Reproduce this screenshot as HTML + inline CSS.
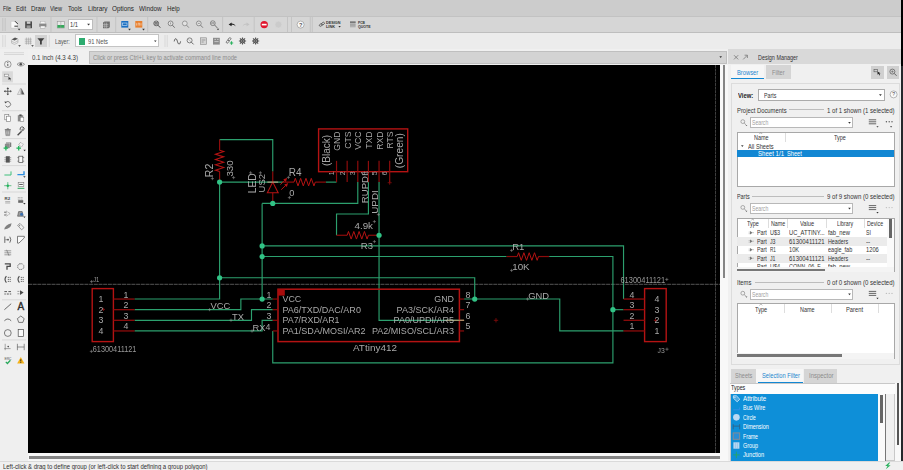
<!DOCTYPE html>
<html><head><meta charset="utf-8">
<style>
*{box-sizing:border-box;margin:0;padding:0}
html,body{width:903px;height:470px;overflow:hidden;background:#f0f0f0;font-family:"Liberation Sans",sans-serif;font-size:6px;color:#333}
.a{position:absolute}
.t{position:absolute;white-space:nowrap;font-size:7px;line-height:8px;transform:scaleX(.765);transform-origin:0 0;color:#2e2e2e}
#menubar{left:0;top:0;width:903px;height:16px;background:#cccccc}
#tb1{left:0;top:16px;width:903px;height:16.6px;background:#d6d6d6;border-top:0.6px solid #c2c2c2;border-bottom:0.8px solid #bebebe}
#tb2{left:0;top:32.6px;width:903px;height:17.6px;background:#ececec}
#row3{left:0;top:49px;width:728px;height:16px;background:#f0f0f0}
#ltb{left:0;top:49px;width:28px;height:411px;background:#efefef}
#canvas{left:28px;top:65px;width:692px;height:388.3px;background:#000}
#status{left:0;top:461px;width:903px;height:9px;background:#f0f0f0;border-top:0.6px solid #dadada}
#dm{left:728px;top:49px;width:175px;height:411px;background:#f0f0f0}
</style></head><body>
<div id="menubar" class="a">
<span class="t" style="left:3px;top:5.0px;color:#262626;transform:scaleX(0.727);">File</span><span class="t" style="left:15.5px;top:5.0px;color:#262626;transform:scaleX(0.829);">Edit</span><span class="t" style="left:31px;top:5.0px;color:#262626;transform:scaleX(0.888);">Draw</span><span class="t" style="left:50px;top:5.0px;color:#262626;transform:scaleX(0.798);">View</span><span class="t" style="left:68px;top:5.0px;color:#262626;transform:scaleX(0.857);">Tools</span><span class="t" style="left:87.5px;top:5.0px;color:#262626;transform:scaleX(0.911);">Library</span><span class="t" style="left:112px;top:5.0px;color:#262626;transform:scaleX(0.912);">Options</span><span class="t" style="left:139px;top:5.0px;color:#262626;transform:scaleX(0.904);">Window</span><span class="t" style="left:166.5px;top:5.0px;color:#262626;transform:scaleX(0.882);">Help</span>
</div>
<div id="tb1" class="a"></div>
<div id="tb2" class="a"></div>
<div id="row3" class="a"></div>
<!-- combos -->
<div class="a" style="left:67.5px;top:19px;width:25px;height:11.4px;background:#fff;border:0.6px solid #bdbdbd"></div>
<span class="t" style="left:70px;top:21.3px;color:#333;transform:scaleX(0.822);">1/1</span>
<div class="a" style="left:35.2px;top:35.2px;width:11.6px;height:11.6px;background:#d2d2d2"></div>
<span class="t" style="left:55.3px;top:37.7px;color:#555;transform:scaleX(0.756);">Layer:</span>
<div class="a" style="left:75px;top:34.4px;width:84px;height:12.4px;background:#fff;border:0.6px solid #c4c4c4"></div>
<div class="a" style="left:78.6px;top:37.6px;width:6.6px;height:7px;background:#2dab6f"></div>
<span class="t" style="left:88px;top:37.7px;color:#555;transform:scaleX(0.829);">91 Nets</span>
<!-- command line -->
<span class="t" style="left:31.5px;top:54.0px;color:#3a3a3a;transform:scaleX(0.876);">0.1 inch (4.3 4.3)</span>
<div class="a" style="left:89px;top:51px;width:637.5px;height:13px;background:#d3d3d3;border:0.6px solid #bfbfbf"></div>
<span class="t" style="left:92.5px;top:54.0px;color:#8c8c8c;transform:scaleX(0.825);">Click or press Ctrl+L key to activate command line mode</span>
<svg class="a" style="left:0;top:0" width="903" height="66" viewBox="0 0 903 66" font-family="Liberation Sans, sans-serif">
<!-- separators tb1 -->
<g stroke="#bcbcbc" stroke-width="0.7" fill="none">
<path d="M2.8,18V31M5.2,18V31M51,17V32M97,17V32M115.7,17V32M147.7,17V32M222.6,17V32M254.2,17V32M287.5,17V32M291.5,17V32M310.3,17V32M312.3,17V32"/>
<path d="M2.8,35V47M5.2,35V47M49.3,35V47M165,35V47M167.200,35V47" stroke-width=".5" stroke="#c4c4c4"/>
</g>
<!-- new doc -->
<path d="M11,21.3h4.2l2.4,2.2v4.6H11z" fill="#fafafa" stroke="#bdbdbd" stroke-width=".5"/>
<path d="M15,21.2l2.8,2.8M14.4,26.2h3.4" stroke="#333" stroke-width="1"/>
<path d="M17.8,28.8h2.6l-1.3,1.6z" fill="#333"/>
<!-- save -->
<path d="M25.2,21.4h6.8v6.8h-6.8z" fill="#4a4a4a"/><rect x="26.8" y="21.4" width="3.6" height="2.4" fill="#cfcfcf"/><rect x="26.6" y="25.4" width="4" height="2.8" fill="#9a9a9a"/>
<!-- print -->
<rect x="39.2" y="23.6" width="7.2" height="3.2" fill="#8a8a8a"/><rect x="40.6" y="21.4" width="4.4" height="2.2" fill="#f4f4f4" stroke="#aaa" stroke-width=".4"/><rect x="40.6" y="26" width="4.4" height="2.2" fill="#f4f4f4" stroke="#999" stroke-width=".4"/>
<!-- sheet icon -->
<rect x="57.2" y="21.4" width="7.2" height="6.6" fill="#e8e8e8" stroke="#8a8a8a" stroke-width=".5"/><rect x="57.4" y="25" width="6.8" height="2.8" fill="#35a85a"/><path d="M60.8,21.4v6.6" stroke="#999" stroke-width=".5"/>
<path d="M87.2,23.8h2.8l-1.4,1.8z" fill="#333"/>
<!-- grid icon -->
<path d="M103,22.6l1.6,-1h5.2v5.6l-1.4,1h-5.4z" fill="#6e6e6e"/><path d="M104.8,22.6v5.4M106.6,22.6v5.4M103,24.4h5.4M103,26.2h5.4" stroke="#d0d0d0" stroke-width=".5"/>
<!-- SCH / BRD -->
<rect x="121.3" y="21" width="7" height="6.6" fill="#1b6fc2"/><rect x="122.6" y="23" width="4.4" height="2.4" fill="none" stroke="#d8e6f5" stroke-width=".6"/>
<path d="M128.2,28.8h2.6l-1.3,1.6z" fill="#333"/>
<rect x="135.3" y="21" width="7" height="6.6" fill="#e8802f"/><path d="M136.6,25.6v-2.4M138.2,25.6v-2.4h1.4v2.4M141,23.2v2.4" stroke="#fbe3cf" stroke-width=".6" fill="none"/>
<path d="M142.2,28.8h2.6l-1.3,1.6z" fill="#333"/>
<!-- zoom icons -->
<g fill="none" stroke="#666" stroke-width=".7">
<circle cx="156.2" cy="23.4" r="2.4" stroke="#3a3a3a" fill="#dedede"/><path d="M158,25.2l2.300,2.500" stroke="#3a3a3a" stroke-width=".9"/><path d="M154.600,22.800h3.200M154.600,24h3.200" stroke="#333" stroke-width=".8"/>
<circle cx="170.600" cy="23.400" r="2.400" fill="#e2e2e2"/><path d="M172.400,25.200l2.300,2.500" stroke-width=".9"/><path d="M170.600,22.400v2" stroke-width=".6"/>
<circle cx="184.800" cy="23.400" r="2.400" fill="#e2e2e2" stroke="#808080"/><path d="M186.600,25.200l2.300,2.500" stroke-width=".9" stroke="#808080"/>
<circle cx="198.800" cy="23.400" r="2.400" fill="#e2e2e2" stroke="#707070"/><path d="M200.600,25.200l2.300,2.500" stroke-width=".9" stroke="#707070"/><path d="M197.800,23.400h2" stroke-width=".6"/>
<circle cx="212.800" cy="23.200" r="2.400" fill="#e2e2e2" stroke="#606060"/><path d="M214.600,25l2.800,3" stroke-width=".9"/><path d="M211.600,22.600h2.400v1.200h-2.400z" stroke-width=".5"/>
</g>
<path d="M216.800,28.800h2.400l-1.200,1.500z" fill="#333"/>
<!-- undo/redo -->
<path d="M228.6,24.4l3,-2v1.2c2,0 3.4,.8 4,2.8c-1,-1.2 -2.4,-1.6 -4,-1.6v1.4z" fill="#1e1e1e"/>
<path d="M249.6,24.4l-3,-2v1.2c-2,0 -3.4,.8 -4,2.8c1,-1.2 2.4,-1.6 4,-1.6v1.4z" fill="#c3c3c3"/>
<!-- stop / disabled / help -->
<circle cx="264.2" cy="24.6" r="3.7" fill="#e0162e"/><rect x="261.8" y="23.8" width="4.8" height="1.6" fill="#fff"/>
<circle cx="278.4" cy="24.6" r="3.5" fill="#cbcbcb" stroke="#d8d8d8" stroke-width=".6"/>
<circle cx="300.6" cy="24.6" r="3.5" fill="#fafafa" stroke="#8a8a8a" stroke-width=".6"/><text x="300.6" y="26.6" font-size="5.6" font-weight="bold" text-anchor="middle" fill="#555">?</text>
<!-- design link / pcb quote -->
<g fill="none" stroke="#555" stroke-width=".8"><rect x="319.2" y="24" width="3.2" height="2" rx="1" transform="rotate(-35 320.8 25)"/><rect x="321.4" y="22.6" width="3.2" height="2" rx="1" transform="rotate(-35 323 23.6)"/></g>
<text x="326" y="24" font-size="3.6" font-weight="bold" fill="#333" textLength="14.4" lengthAdjust="spacingAndGlyphs">DESIGN</text>
<text x="326" y="27.6" font-size="3.6" font-weight="bold" fill="#333" textLength="9" lengthAdjust="spacingAndGlyphs">LINK</text>
<path d="M338.4,26h2.4l-1.2,1.5z" fill="#333"/>
<rect x="350" y="21.4" width="5.6" height="6" fill="#b5b5b5"/><rect x="350" y="21.4" width="5.6" height="1.6" fill="#777"/><path d="M350,24.4h5.6M350,25.8h5.6" stroke="#8a8a8a" stroke-width=".4"/>
<text x="358" y="24" font-size="3.6" font-weight="bold" fill="#333" textLength="7" lengthAdjust="spacingAndGlyphs">PCB</text>
<text x="358" y="27.6" font-size="3.6" font-weight="bold" fill="#333" textLength="12.6" lengthAdjust="spacingAndGlyphs">QUOTE</text>
<!-- toolbar2 icons -->
<path d="M11.6,39.4l3.4,-1.8l3,1.2l-3.4,1.8z" fill="#555"/><path d="M11.6,41.4l3,1.2l3.4,-1.8M11.6,43.2l3,1.2l3.4,-1.8M11.6,39.6v3.6M18,39v3.6" stroke="#999" stroke-width=".5" fill="none"/>
<path d="M18.2,45.2h2.6l-1.3,1.6z" fill="#333"/>
<path d="M26.4,37.6v7M28.4,37.6v7M30.4,37.6v7M24.8,39.2h7M24.8,41.2h7M24.8,43.2h7" stroke="#9c9c9c" stroke-width=".6"/>
<path d="M31.2,45.2h2.6l-1.3,1.6z" fill="#333"/>
<path d="M37.4,38.2h7l-2.6,3v3.2h-1.8v-3.2z" fill="#3f3f3f"/>
<path d="M154,40.4h2.6l-1.3,1.7z" fill="#333"/>
<path d="M174.2,41.4c.8,-3.6 2.2,-3.6 3.2,0s2.400,3.6 3.200,0" fill="none" stroke="#444" stroke-width=".9"/>
<circle cx="189.600" cy="40.400" r="2.500" fill="none" stroke="#666" stroke-width=".8"/><path d="M191.400,42.200l2.200,2.200" stroke="#666" stroke-width="1"/><path d="M188.200,39l2.800,2.800" stroke="#888" stroke-width=".5"/>
<rect x="200.400" y="37.800" width="6.200" height="6.600" fill="#d4d4d4" stroke="#8a8a8a" stroke-width=".6"/><path d="M201.600,40h3.800M201.600,42h2" stroke="#777" stroke-width=".6"/>
<rect x="213" y="37.800" width="6.800" height="6.800" fill="#8c8c8c"/><path d="M214.400,39.400h1.600M217,39.400h1.600M214.400,41.600h4.200" stroke="#e0e0e0" stroke-width=".7"/>
<g fill="none" stroke="#666" stroke-width=".8"><rect x="226" y="40.600" width="3.400" height="2" rx="1" transform="rotate(-50 227.700 41.600)"/><rect x="227.800" y="38.200" width="3.400" height="2" rx="1" transform="rotate(-50 229.500 39.200)"/></g>
<path d="M229.800,43h3.400M231.500,41.300v3.400" stroke="#2bb25f" stroke-width="1.200"/>
<path d="M244.50,41.00L246.10,41.00M243.91,42.41L245.05,43.55M242.50,43.00L242.50,44.60M241.09,42.41L239.95,43.55M240.50,41.00L238.90,41.00M241.09,39.59L239.95,38.45M242.50,39.00L242.50,37.40M243.91,39.59L245.05,38.45" stroke="#555" stroke-width="1.1" fill="none"/><circle cx="242.5" cy="41" r="2" fill="#9a9a9a" stroke="#4a4a4a" stroke-width="1"/><circle cx="242.5" cy="41" r=".8" fill="#3a3a3a"/>
<path d="M257.60,41.00L259.20,41.00M257.01,42.41L258.15,43.55M255.60,43.00L255.60,44.60M254.19,42.41L253.05,43.55M253.60,41.00L252.00,41.00M254.19,39.59L253.05,38.45M255.60,39.00L255.60,37.40M257.01,39.59L258.15,38.45" stroke="#555" stroke-width="1.1" fill="none"/><circle cx="255.6" cy="41" r="2" fill="#9a9a9a" stroke="#4a4a4a" stroke-width="1"/><circle cx="255.6" cy="41" r=".8" fill="#3a3a3a"/>
<!-- command line dropdown arrow -->
<path d="M719.400,56.200h2.600l-1.300,1.700z" fill="#333"/>
</svg>
<div id="canvas" class="a"></div>
<svg class="a" style="left:28px;top:65px" width="692" height="388.3" viewBox="28 65 692 388.3" font-family="Liberation Sans, sans-serif">
<line x1="28" y1="284.3" x2="720" y2="284.3" stroke="#6a6a6a" stroke-width="0.8" stroke-dasharray="4 .7"/>
<line x1="715.5" y1="65" x2="715.5" y2="454" stroke="#6a6a6a" stroke-width="0.6" stroke-dasharray="3 .6"/>
<polyline points="219.6,139.6 272.75,139.6 272.75,171.49" fill="none" stroke="#2ca06e" stroke-width="1.15"/>
<polyline points="219.6,182.12 283.38,182.12" fill="none" stroke="#2ca06e" stroke-width="1.15"/>
<polyline points="219.6,182.12 219.6,299.05 134.56,299.05" fill="none" stroke="#2ca06e" stroke-width="1.15"/>
<polyline points="219.6,277.79 474.72,277.79 474.72,299.05" fill="none" stroke="#2ca06e" stroke-width="1.15"/>
<polyline points="464.09,299.05 559.76,299.05 559.76,330.94 623.54,330.94" fill="none" stroke="#2ca06e" stroke-width="1.15"/>
<polyline points="272.75,203.38 272.75,203.38" fill="none" stroke="#2ca06e" stroke-width="1.15"/>
<polyline points="262.12,203.38 357.79,203.38 357.79,182.12" fill="none" stroke="#2ca06e" stroke-width="1.15"/>
<polyline points="262.12,203.38 262.12,299.05" fill="none" stroke="#2ca06e" stroke-width="1.15"/>
<polyline points="262.12,245.9 623.54,245.9 623.54,299.05" fill="none" stroke="#2ca06e" stroke-width="1.15"/>
<polyline points="262.12,256.53 506.61,256.53" fill="none" stroke="#2ca06e" stroke-width="1.15"/>
<polyline points="549.13,256.53 612.91,256.53 612.91,362.83 272.75,362.83 272.75,330.94" fill="none" stroke="#2ca06e" stroke-width="1.15"/>
<polyline points="612.91,309.68 623.54,309.68" fill="none" stroke="#2ca06e" stroke-width="1.15"/>
<polyline points="272.75,299.05 240.86,299.05 240.86,309.68 134.56,309.68" fill="none" stroke="#2ca06e" stroke-width="1.15"/>
<polyline points="272.75,309.68 251.49,309.68 251.49,320.31 134.56,320.31" fill="none" stroke="#2ca06e" stroke-width="1.15"/>
<polyline points="272.75,320.31 262.12,320.31 262.12,330.94 134.56,330.94" fill="none" stroke="#2ca06e" stroke-width="1.15"/>
<polyline points="325.9,182.12 336.53,182.12" fill="none" stroke="#2ca06e" stroke-width="1.15"/>
<polyline points="368.42,182.12 368.42,214.01 336.53,214.01 336.53,235.27" fill="none" stroke="#2ca06e" stroke-width="1.15"/>
<polyline points="379.05,182.12 379.05,320.31 464.09,320.31" fill="none" stroke="#2ca06e" stroke-width="1.15"/>
<line x1="219.6" y1="139.6" x2="219.6" y2="150.23" stroke="#8e0c0c" stroke-width="1.2"/>
<line x1="219.6" y1="171.49" x2="219.6" y2="182.12" stroke="#8e0c0c" stroke-width="1.2"/>
<polyline points="219.6,150.23 223.7,151.56 215.5,154.22 223.7,156.87 215.5,159.53 223.7,162.19 215.5,164.85 223.7,167.5 215.5,170.16 219.6,171.49" fill="none" stroke="#b41313" stroke-width="1.1"/>
<line x1="283.38" y1="182.12" x2="294.01" y2="182.12" stroke="#8e0c0c" stroke-width="1.2"/>
<line x1="315.27" y1="182.12" x2="325.9" y2="182.12" stroke="#8e0c0c" stroke-width="1.2"/>
<polyline points="294.01,182.12 295.34,178.32 298.0,185.92000000000002 300.65,178.32 303.31,185.92000000000002 305.97,178.32 308.63,185.92000000000002 311.28,178.32 313.94,185.92000000000002 315.27,182.12" fill="none" stroke="#b41313" stroke-width="1" stroke-linejoin="miter"/>
<line x1="336.53" y1="235.27" x2="347.16" y2="235.27" stroke="#8e0c0c" stroke-width="1.2"/>
<line x1="368.42" y1="235.27" x2="379.05" y2="235.27" stroke="#8e0c0c" stroke-width="1.2"/>
<polyline points="347.16,235.27 348.49,231.47 351.15,239.07000000000002 353.8,231.47 356.46,239.07000000000002 359.12,231.47 361.78,239.07000000000002 364.43,231.47 367.09,239.07000000000002 368.42,235.27" fill="none" stroke="#b41313" stroke-width="1" stroke-linejoin="miter"/>
<line x1="506.61" y1="256.53" x2="517.24" y2="256.53" stroke="#8e0c0c" stroke-width="1.2"/>
<line x1="538.5" y1="256.53" x2="549.13" y2="256.53" stroke="#8e0c0c" stroke-width="1.2"/>
<polyline points="517.24,256.53 518.57,252.72999999999996 521.23,260.33 523.88,252.72999999999996 526.54,260.33 529.2,252.72999999999996 531.86,260.33 534.51,252.72999999999996 537.17,260.33 538.5,256.53" fill="none" stroke="#b41313" stroke-width="1" stroke-linejoin="miter"/>
<line x1="272.75" y1="171.49" x2="272.75" y2="182.12" stroke="#8e0c0c" stroke-width="1.2"/>
<line x1="272.75" y1="192.75" x2="272.75" y2="203.38" stroke="#8e0c0c" stroke-width="1.2"/>
<path d="M267.35,192.75L272.75,182.12L278.15,192.75Z" fill="none" stroke="#b41313" stroke-width="1.1"/>
<line x1="267.35" y1="182.12" x2="278.15" y2="182.12" stroke="#c9a48a" stroke-width="1.0"/>
<path d="M280.3,184.6L286.5,178.7" stroke="#b41313" stroke-width="1"/>
<path d="M287.1,178.1L283.3,179.29999999999998L285.9,181.89999999999998Z" fill="#b41313"/>
<path d="M281.2,189.7L287.4,183.79999999999998" stroke="#b41313" stroke-width="1"/>
<path d="M288.0,183.2L284.2,184.39999999999998L286.79999999999995,186.99999999999997Z" fill="#b41313"/>
<rect x="318.6" y="128.9" width="89.1" height="42.8" fill="none" stroke="#b41313" stroke-width="1.4"/>
<line x1="336.53" y1="160.86" x2="336.53" y2="182.12" stroke="#8e0c0c" stroke-width="1.2"/>
<line x1="347.16" y1="160.86" x2="347.16" y2="182.12" stroke="#8e0c0c" stroke-width="1.2"/>
<line x1="357.79" y1="160.86" x2="357.79" y2="182.12" stroke="#8e0c0c" stroke-width="1.2"/>
<line x1="368.42" y1="160.86" x2="368.42" y2="182.12" stroke="#8e0c0c" stroke-width="1.2"/>
<line x1="379.05" y1="160.86" x2="379.05" y2="182.12" stroke="#8e0c0c" stroke-width="1.2"/>
<line x1="389.68" y1="160.86" x2="389.68" y2="182.12" stroke="#8e0c0c" stroke-width="1.2"/>
<path d="M387.68,182.72H391.68M389.68,180.72V184.72" stroke="#8e0c0c" stroke-width="0.8" fill="none"/>
<rect x="278" y="289.2" width="181.4" height="52.4" fill="none" stroke="#b41313" stroke-width="1.5"/>
<rect x="278" y="289.2" width="6.8" height="6.4" fill="#a80c0c"/>
<line x1="272.75" y1="299.05" x2="278" y2="299.05" stroke="#8e0c0c" stroke-width="1.2"/>
<line x1="459.4" y1="299.05" x2="464.09" y2="299.05" stroke="#8e0c0c" stroke-width="1.2"/>
<line x1="272.75" y1="309.68" x2="278" y2="309.68" stroke="#8e0c0c" stroke-width="1.2"/>
<line x1="459.4" y1="309.68" x2="464.09" y2="309.68" stroke="#8e0c0c" stroke-width="1.2"/>
<line x1="272.75" y1="320.31" x2="278" y2="320.31" stroke="#8e0c0c" stroke-width="1.2"/>
<line x1="459.4" y1="320.31" x2="464.09" y2="320.31" stroke="#8e0c0c" stroke-width="1.2"/>
<line x1="272.75" y1="330.94" x2="278" y2="330.94" stroke="#8e0c0c" stroke-width="1.2"/>
<line x1="459.4" y1="330.94" x2="464.09" y2="330.94" stroke="#8e0c0c" stroke-width="1.2"/>
<line x1="445.46" y1="320.31" x2="464.09" y2="320.31" stroke="#b09a70" stroke-width="1.1"/>
<path d="M493.8,320.3H498.2M496,318.1V322.5" stroke="#8e0c0c" stroke-width="0.8" fill="none"/>
<rect x="92.2" y="288.6" width="21.2" height="53" fill="none" stroke="#b41313" stroke-width="1.4"/>
<rect x="644.6" y="288.6" width="21.6" height="53" fill="none" stroke="#b41313" stroke-width="1.4"/>
<line x1="113.4" y1="299.05" x2="134.56" y2="299.05" stroke="#8e0c0c" stroke-width="1.3"/>
<line x1="623.54" y1="299.05" x2="644.6" y2="299.05" stroke="#8e0c0c" stroke-width="1.3"/>
<line x1="113.4" y1="309.68" x2="134.56" y2="309.68" stroke="#8e0c0c" stroke-width="1.3"/>
<line x1="623.54" y1="309.68" x2="644.6" y2="309.68" stroke="#8e0c0c" stroke-width="1.3"/>
<line x1="113.4" y1="320.31" x2="134.56" y2="320.31" stroke="#8e0c0c" stroke-width="1.3"/>
<line x1="623.54" y1="320.31" x2="644.6" y2="320.31" stroke="#8e0c0c" stroke-width="1.3"/>
<line x1="113.4" y1="330.94" x2="134.56" y2="330.94" stroke="#8e0c0c" stroke-width="1.3"/>
<line x1="623.54" y1="330.94" x2="644.6" y2="330.94" stroke="#8e0c0c" stroke-width="1.3"/>
<path d="M101.80000000000001,309.4H105.0M103.4,307.79999999999995V311.0" stroke="#8e0c0c" stroke-width="0.8" fill="none"/>
<path d="M653.8000000000001,320.4H657.4M655.6,318.59999999999997V322.2" stroke="#8e0c0c" stroke-width="0.8" fill="none"/>
<circle cx="219.6" cy="182.12" r="2.6" fill="#31c285"/>
<circle cx="219.6" cy="277.79" r="2.6" fill="#31c285"/>
<circle cx="272.75" cy="203.38" r="2.6" fill="#31c285"/>
<circle cx="262.12" cy="245.9" r="2.6" fill="#31c285"/>
<circle cx="262.12" cy="256.53" r="2.6" fill="#31c285"/>
<circle cx="262.12" cy="299.05" r="2.6" fill="#31c285"/>
<circle cx="379.05" cy="235.27" r="2.6" fill="#31c285"/>
<circle cx="474.72" cy="299.05" r="2.6" fill="#31c285"/>
<circle cx="612.91" cy="309.68" r="2.6" fill="#31c285"/>
<g opacity=".9">
<text x="93.2" y="282.2" font-size="7.9" textLength="6.2" lengthAdjust="spacingAndGlyphs" fill="#a8a8a8">J1</text>
<path d="M90.0,281.6H93.19999999999999M91.6,280.0V283.20000000000005" stroke="#9a9a9a" stroke-width="0.6" fill="none"/>
<text x="92.8" y="352.4" font-size="8.4" textLength="43.6" lengthAdjust="spacingAndGlyphs" fill="#a8a8a8">61300411121</text>
<path d="M89.80000000000001,351.4H93.0M91.4,349.79999999999995V353.0" stroke="#9a9a9a" stroke-width="0.6" fill="none"/>
<text x="98.6" y="302.3" font-size="8.8" fill="#bcbcbc">1</text>
<text x="654.4" y="302.3" font-size="8.8" fill="#bcbcbc">4</text>
<text x="98.6" y="312.9" font-size="8.8" fill="#bcbcbc">2</text>
<text x="654.4" y="312.9" font-size="8.8" fill="#bcbcbc">3</text>
<text x="98.6" y="323.5" font-size="8.8" fill="#bcbcbc">3</text>
<text x="654.4" y="323.5" font-size="8.8" fill="#bcbcbc">2</text>
<text x="98.6" y="334.1" font-size="8.8" fill="#bcbcbc">4</text>
<text x="654.4" y="334.1" font-size="8.8" fill="#bcbcbc">1</text>
<text x="123.4" y="297.7" font-size="8.8" fill="#bcbcbc">1</text>
<text x="629.4" y="297.7" font-size="8.8" fill="#bcbcbc">4</text>
<text x="123.4" y="308.3" font-size="8.8" fill="#bcbcbc">2</text>
<text x="629.4" y="308.3" font-size="8.8" fill="#bcbcbc">3</text>
<text x="123.4" y="318.9" font-size="8.8" fill="#bcbcbc">3</text>
<text x="629.4" y="318.9" font-size="8.8" fill="#bcbcbc">2</text>
<text x="123.4" y="329.5" font-size="8.8" fill="#bcbcbc">4</text>
<text x="629.4" y="329.5" font-size="8.8" fill="#bcbcbc">1</text>
<text x="620.4" y="283.2" font-size="8.4" textLength="44.8" lengthAdjust="spacingAndGlyphs" fill="#a8a8a8">61300411121</text>
<path d="M665.1999999999999,279.4H668.4M666.8,277.79999999999995V281.0" stroke="#9a9a9a" stroke-width="0.6" fill="none"/>
<text x="657.6" y="352.8" font-size="7.9" textLength="7.2" lengthAdjust="spacingAndGlyphs" fill="#a8a8a8">J3</text>
<path d="M665.4,349.2H668.6M667,347.59999999999997V350.8" stroke="#9a9a9a" stroke-width="0.6" fill="none"/>
<text x="210.4" y="309.2" font-size="9.4" fill="#bcbcbc">VCC</text>
<path d="M208.0,309.6H211.2M209.6,308.0V311.20000000000005" stroke="#9a9a9a" stroke-width="0.6" fill="none"/>
<text x="232" y="319.8" font-size="9.4" fill="#bcbcbc">TX</text>
<path d="M229.4,320.2H232.6M231,318.59999999999997V321.8" stroke="#9a9a9a" stroke-width="0.6" fill="none"/>
<text x="252.6" y="330.6" font-size="9.4" fill="#bcbcbc">RX</text>
<path d="M250.4,331H253.6M252,329.4V332.6" stroke="#9a9a9a" stroke-width="0.6" fill="none"/>
<text x="528.2" y="298.6" font-size="9.4" fill="#bcbcbc">GND</text>
<path d="M526.0,299H529.2M527.6,297.4V300.6" stroke="#9a9a9a" stroke-width="0.6" fill="none"/>
<text x="266.4" y="297.7" font-size="8.8" fill="#bcbcbc">1</text>
<text x="266.4" y="308.3" font-size="8.8" fill="#bcbcbc">2</text>
<text x="266.4" y="318.9" font-size="8.8" fill="#bcbcbc">3</text>
<text x="265.4" y="330" font-size="8.8" fill="#bcbcbc">4</text>
<text x="465.6" y="297.7" font-size="8.8" fill="#bcbcbc">8</text>
<text x="465.6" y="308.3" font-size="8.8" fill="#bcbcbc">7</text>
<text x="465.6" y="318.7" font-size="8.8" fill="#bcbcbc">6</text>
<text x="465.6" y="329.3" font-size="8.8" fill="#bcbcbc">5</text>
<text x="282.5" y="302.2" font-size="8.9" fill="#bcbcbc">VCC</text>
<text x="282.5" y="312.8" font-size="8.9" textLength="78.4" lengthAdjust="spacingAndGlyphs" fill="#bcbcbc">PA6/TXD/DAC/AR0</text>
<text x="282.5" y="323.4" font-size="8.9" fill="#bcbcbc">PA7/RXD/AR1</text>
<text x="282.5" y="334" font-size="8.9" textLength="83" lengthAdjust="spacingAndGlyphs" fill="#bcbcbc">PA1/SDA/MOSI/AR2</text>
<text x="454" y="302.2" font-size="8.9" text-anchor="end" fill="#bcbcbc">GND</text>
<text x="454" y="312.8" font-size="8.9" text-anchor="end" textLength="57.4" lengthAdjust="spacingAndGlyphs" fill="#bcbcbc">PA3/SCK/AR4</text>
<text x="454" y="323.4" font-size="8.9" text-anchor="end" textLength="60.4" lengthAdjust="spacingAndGlyphs" fill="#bcbcbc">PA0/UPDI/AR5</text>
<text x="454" y="334" font-size="8.9" text-anchor="end" textLength="82" lengthAdjust="spacingAndGlyphs" fill="#bcbcbc">PA2/MISO/SCL/AR3</text>
<text x="353" y="351.2" font-size="9.8" textLength="44" lengthAdjust="spacingAndGlyphs" fill="#bcbcbc">ATtiny412</text>
<text x="512.2" y="250" font-size="9.6" fill="#bcbcbc">R1</text>
<path d="M510.0,250.4H513.2M511.6,248.8V252.0" stroke="#9a9a9a" stroke-width="0.6" fill="none"/>
<text x="512.2" y="270" font-size="9.8" fill="#bcbcbc">10K</text>
<path d="M510.0,270.4H513.2M511.6,268.79999999999995V272.0" stroke="#9a9a9a" stroke-width="0.6" fill="none"/>
<text x="373" y="229.2" font-size="9.8" text-anchor="end" fill="#bcbcbc">4.9k</text>
<path d="M372.79999999999995,221.6H376.0M374.4,220.0V223.2" stroke="#9a9a9a" stroke-width="0.6" fill="none"/>
<text x="373" y="248.8" font-size="9.5" text-anchor="end" fill="#bcbcbc">R3</text>
<path d="M372.79999999999995,241.6H376.0M374.4,240.0V243.2" stroke="#9a9a9a" stroke-width="0.6" fill="none"/>
<text x="288.7" y="175.6" font-size="10" fill="#bcbcbc">R4</text>
<path d="M286.79999999999995,177.4H290.0M288.4,175.8V179.0" stroke="#9a9a9a" stroke-width="0.6" fill="none"/>
<text x="289.3" y="196" font-size="9.3" fill="#bcbcbc">0</text>
<path d="M287.79999999999995,197.6H291.0M289.4,196.0V199.2" stroke="#9a9a9a" stroke-width="0.6" fill="none"/>
<text x="213.2" y="177.2" font-size="10.6" transform="rotate(-90 213.2 177.2)" fill="#bcbcbc">R2</text>
<path d="M210.8,178.6H214.0M212.4,177.0V180.2" stroke="#9a9a9a" stroke-width="0.6" fill="none"/>
<text x="233" y="176.6" font-size="9.8" transform="rotate(-90 233 176.6)" fill="#bcbcbc">330</text>
<path d="M232.0,177.6H235.2M233.6,176.0V179.2" stroke="#9a9a9a" stroke-width="0.6" fill="none"/>
<text x="256.1" y="193.2" font-size="10.3" transform="rotate(-90 256.1 193.2)" fill="#bcbcbc">LED</text>
<path d="M249.0,172.8H252.2M250.6,171.20000000000002V174.4" stroke="#9a9a9a" stroke-width="0.6" fill="none"/>
<text x="265.2" y="192.4" font-size="9.5" transform="rotate(-90 265.2 192.4)" fill="#bcbcbc">US2</text>
<path d="M258.79999999999995,172.8H262.0M260.4,171.20000000000002V174.4" stroke="#9a9a9a" stroke-width="0.6" fill="none"/>
<text x="329.8" y="166" font-size="10" transform="rotate(-90 329.8 166)" fill="#bcbcbc">(Black)</text>
<text x="340.2" y="131.4" font-size="8.7" text-anchor="end" transform="rotate(-90 340.2 131.4)" fill="#bcbcbc">GND</text>
<text x="334.2" y="175.2" font-size="7" transform="rotate(-90 334.2 175.2)" fill="#bcbcbc">1</text>
<text x="350.83" y="131.4" font-size="8.7" text-anchor="end" transform="rotate(-90 350.83 131.4)" fill="#bcbcbc">CTS</text>
<text x="344.83" y="175.2" font-size="7" transform="rotate(-90 344.83 175.2)" fill="#bcbcbc">2</text>
<text x="361.46" y="131.4" font-size="8.7" text-anchor="end" transform="rotate(-90 361.46 131.4)" fill="#bcbcbc">VCC</text>
<text x="355.46" y="175.2" font-size="7" transform="rotate(-90 355.46 175.2)" fill="#bcbcbc">3</text>
<text x="372.09" y="131.4" font-size="8.7" text-anchor="end" transform="rotate(-90 372.09 131.4)" fill="#bcbcbc">TXD</text>
<text x="366.09" y="175.2" font-size="7" transform="rotate(-90 366.09 175.2)" fill="#bcbcbc">4</text>
<text x="382.72" y="131.4" font-size="8.7" text-anchor="end" transform="rotate(-90 382.72 131.4)" fill="#bcbcbc">RXD</text>
<text x="376.72" y="175.2" font-size="7" transform="rotate(-90 376.72 175.2)" fill="#bcbcbc">5</text>
<text x="393.35" y="131.4" font-size="8.7" text-anchor="end" transform="rotate(-90 393.35 131.4)" fill="#bcbcbc">RTS</text>
<text x="387.35" y="175.2" font-size="7" transform="rotate(-90 387.35 175.2)" fill="#bcbcbc">6</text>
<text x="403" y="168.2" font-size="10.2" transform="rotate(-90 403 168.2)" fill="#bcbcbc">(Green)</text>
<text x="367.8" y="203.2" font-size="9.6" transform="rotate(-90 367.8 203.2)" fill="#bcbcbc">RUPDI</text>
<path d="M365.59999999999997,172.6H368.8M367.2,171.0V174.2" stroke="#9a9a9a" stroke-width="0.6" fill="none"/>
<text x="378" y="213.8" font-size="9.9" transform="rotate(-90 378 213.8)" fill="#bcbcbc">UPDI</text>
<path d="M376.79999999999995,214.6H380.0M378.4,213.0V216.2" stroke="#9a9a9a" stroke-width="0.6" fill="none"/>
</g>
</svg>
<div id="ltb" class="a"></div>
<svg class="a" style="left:0;top:49px" width="28" height="411" viewBox="0 49 28 411" font-family="Liberation Sans, sans-serif">
<path d="M4,52.7H24M4,54.5H24" stroke="#cdcdcd" stroke-width=".7"/>
<circle cx="7.8" cy="64.3" r="3.3" fill="none" stroke="#777" stroke-width=".7"/><path d="M7.8,63.9v2.2" stroke="#4a4a4a" stroke-width=".9"/><circle cx="7.8" cy="62.599999999999994" r=".55" fill="#4a4a4a"/>
<path d="M17.0,64.3q3.8,-3.6 7.6,0q-3.8,3.6 -7.6,0z" fill="none" stroke="#777" stroke-width=".7"/><circle cx="20.8" cy="64.3" r="1.3" fill="#4a4a4a"/>
<rect x="2.2" y="71.3" width="10.7" height="11.1" fill="#d9d9d9"/>
<rect x="4.3" y="74.2" width="4" height="2.4" fill="#f4f4f4" stroke="#8a8a8a" stroke-width=".6"/><path d="M8.5,77l2.7,1.500l-1.100,.3l.6,1.300l-.6,.3l-.6,-1.300l-1,.8z" fill="#333"/>
<path d="M2,84H26" stroke="#cfcfcf" stroke-width=".7"/>
<path d="M4.4,91.3h6.8M7.8,87.89999999999999v6.8" stroke="#4a4a4a" stroke-width=".8"/><path d="M3.8,91.3l1.6,-1.3v2.6zM11.8,91.3l-1.6,-1.3v2.6zM7.8,87.3l-1.3,1.6h2.6zM7.8,95.3l-1.3,-1.6h2.6z" fill="#4a4a4a"/>
<path d="M20.6,88.1v6.400h-3.200z" fill="#e4e4e4" stroke="#9a9a9a" stroke-width=".5"/><path d="M21.3,88.1v6.400h3.200z" fill="#5a5a5a"/>
<path d="M5.9,102.4a2.700,2.700 0 1 1 -.4,3.200" fill="none" stroke="#4a4a4a" stroke-width=".7"/><path d="M4.4,101.60000000000001l2.400,.1l-1.500,1.900z" fill="#4a4a4a"/>
<path d="M2,110.7H26" stroke="#cfcfcf" stroke-width=".7"/>
<rect x="4.8" y="114.6" width="4" height="5.2" fill="#fff" stroke="#777" stroke-width=".6"/><rect x="6.6" y="116.2" width="4" height="5.2" fill="#fff" stroke="#777" stroke-width=".6"/>
<rect x="17.8" y="115.2" width="5.4" height="6.2" fill="#8a8a8a"/><rect x="19.400000000000002" y="114.4" width="2.2" height="1.6" fill="#4a4a4a"/><rect x="20.2" y="117.2" width="3.6" height="4.4" fill="#fff" stroke="#777" stroke-width=".5"/>
<path d="M5.4,130.2h4.8l-.5,5.4h-3.8z" fill="#9a9a9a" stroke="#777" stroke-width=".5"/><path d="M4.8,129.6h6M6.8,128.8h2" stroke="#4a4a4a" stroke-width=".7"/><path d="M6.8999999999999995,131.4v3M8.7,131.4v3" stroke="#e8e8e8" stroke-width=".5"/>
<path d="M17.6,135.2l4,-4" stroke="#4a4a4a" stroke-width="1.3"/><path d="M21.2,130.6a2,2 0 1 1 2.800,-1l-1.400,1.200l-.8,-.8l1,-1.400" fill="none" stroke="#4a4a4a" stroke-width=".9"/>
<path d="M2,138.6H26" stroke="#cfcfcf" stroke-width=".7"/>
<rect x="6.0" y="142.6" width="5.2" height="4.4" fill="#5e5e5e"/><rect x="4.8" y="143.6" width="5.2" height="4.600" fill="#8c8c8c" stroke="#efefef" stroke-width=".4"/><path d="M3.5999999999999996,148.2h4.600M5.9,146v4.400" stroke="#22b35a" stroke-width="1.300"/>
<path d="M20.2,142.4l3.200,1.700l-1.700,2.700l-3.200,-1.700z" fill="#f4f4f4" stroke="#777" stroke-width=".6" stroke-dasharray="1 .5"/><path d="M16.4,148.2h4.600M18.7,146v4.400" stroke="#22b35a" stroke-width="1.300"/><path d="M23.400000000000002,149.8h2.400l-1.200,1.500z" fill="#333"/>
<rect x="5.8" y="156.20000000000002" width="4" height="6.400" fill="#555"/><path d="M4.4,157.6h1.400M4.4,159.4h1.400M4.4,161.20000000000002h1.400M9.8,157.6h1.400M9.8,159.4h1.400M9.8,161.20000000000002h1.400" stroke="#777" stroke-width=".6"/>
<rect x="18.8" y="156.20000000000002" width="4" height="6.400" fill="#fafafa" stroke="#4a4a4a" stroke-width=".7"/><path d="M17.400000000000002,157.6h1.400M17.400000000000002,161.20000000000002h1.400M22.8,157.6h1.400M22.8,161.20000000000002h1.400" stroke="#4a4a4a" stroke-width=".6"/>
<path d="M2,165.6H26" stroke="#cfcfcf" stroke-width=".7"/>
<path d="M4.4,175h6.600v-3.600" fill="none" stroke="#3fbf7a" stroke-width="1"/>
<path d="M17.400000000000002,174.6h6.600v-3.400" fill="none" stroke="#2d8ee0" stroke-width="1.400"/><path d="M23.2,176.2h2.400l-1.200,1.500z" fill="#333"/>
<path d="M4.199999999999999,185.7h7.200M7.8,182.1v7.200" stroke="#2aa85c" stroke-width=".7"/><circle cx="7.8" cy="185.7" r="1.200" fill="#22b35a"/>
<rect x="18.2" y="182.5" width="5.600" height="3.800" fill="#fff" stroke="#777" stroke-width=".6"/><path d="M19.2,184.39999999999998h3.600" stroke="#4a4a4a" stroke-width="1"/><path d="M17.6,188.29999999999998h6.800" stroke="#2aa85c" stroke-width="1"/>
<path d="M2,192H26" stroke="#cfcfcf" stroke-width=".7"/>
<text x="4.6" y="200.2" font-size="4.400" font-weight="bold" fill="#4a4a4a">R2</text><path d="M5.199999999999999,201.6h5M5.199999999999999,203.0h5" stroke="#777" stroke-width=".5"/>
<path d="M17.8,197.6h5M17.8,199.2h5" stroke="#777" stroke-width=".6" stroke-dasharray="1 .5"/><rect x="18.2" y="200.2" width="5" height="2.600" fill="#666"/><path d="M23.2,203.0h2.400l-1.200,1.500z" fill="#333"/>
<path d="M6.199999999999999,211.0l4,2.600l-4,2.600z" fill="none" stroke="#777" stroke-width=".6" stroke-dasharray="1.200 .6"/><path d="M4.0,212.2h2M4.0,215.0h2" stroke="#4a4a4a" stroke-width=".7"/>
<path d="M17.6,216.2l1,-4.600h3.600l1,4.600z" fill="#9c9c9c" stroke="#4a4a4a" stroke-width=".6"/><circle cx="21.6" cy="214.2" r="1.500" fill="#3a6fb0"/><path d="M23.2,216.4h2.400l-1.200,1.500z" fill="#333"/>
<path d="M4.199999999999999,229.4q.4,-4.400 7.400,-6.200q-.4,5.400 -7.400,6.200z" fill="#808080"/>
<path d="M17.6,225.4l2.400,-2l4,4.200l-2.400,2.200z" fill="none" stroke="#777" stroke-width=".7"/><circle cx="19.6" cy="225.6" r=".6" fill="#777"/>
<path d="M4.8,236.5v6.400" stroke="#4a4a4a" stroke-width=".8"/><path d="M9.8,236.7q2,3 0,6" stroke="#4a4a4a" stroke-width=".8" fill="none"/><circle cx="8.0" cy="239.7" r=".9" fill="#4a4a4a"/><path d="M5.4,239.7h1.600" stroke="#4a4a4a" stroke-width=".6"/>
<path d="M17.5,236.29999999999998h6.800v1.600l-5.400,5.200h-1.400z" fill="#fafafa" stroke="#4a4a4a" stroke-width=".7"/>
<path d="M4.4,250.8h6.800M4.4,252.8h6.800M4.4,254.8h6.800M6.6,249.8l2.400,6" stroke="#666" stroke-width=".6" fill="none"/>
<path d="M4.8,263.8h5.400v2.600h-3.200v3.400" fill="none" stroke="#4a4a4a" stroke-width="1.300"/>
<path d="M19.2,263.40000000000003l3.200,0l1.800,2l0,2.600l-1.800,1.800l-3.200,0l-1.800,-1.800l0,-2.600z" fill="none" stroke="#4a4a4a" stroke-width=".9" stroke-dasharray="1.400 .9" transform="translate(2.50 31.99) scale(.88)"/>
<path d="M6.4,276.2q-2.800,3.200 0,6.400" fill="none" stroke="#4a4a4a" stroke-width="1.100"/><path d="M7.8,277.4h3.200M7.8,279.4h3.200M7.8,281.4h3.200" stroke="#4a4a4a" stroke-width=".8" stroke-dasharray="1.200 .6"/>
<path d="M19.400000000000002,276.2q-2.800,3.200 0,6.400" fill="none" stroke="#4a4a4a" stroke-width="1.100"/><path d="M20.8,277.4h3.200M20.8,279.4h3.200M20.8,281.4h3.200" stroke="#4a4a4a" stroke-width=".8" stroke-dasharray="1.200 .6"/>
<path d="M4.4,291.6h2.600M8.4,291.6h2.600M4.4,294.0h1.400M6.8,294.0h2M9.8,294.0h1.400" stroke="#4a4a4a" stroke-width=".9"/>
<path d="M17.400000000000002,291.40000000000003h2M17.400000000000002,293.8h2" stroke="#777" stroke-width=".7"/><path d="M20.0,290.20000000000005l3.600,2.400l-3.600,2.400z" fill="#4a4a4a"/>
<path d="M2,299.8H26" stroke="#cfcfcf" stroke-width=".7"/>
<path d="M4.4,309.7l6.800,-6" stroke="#4a4a4a" stroke-width=".8"/>
<g opacity=".99"><text x="20.8" y="310.2" font-size="10" text-anchor="middle" fill="#2a2a2a" stroke="#2a2a2a" stroke-width=".35">A</text></g>
<path d="M4.4,320.79999999999995q3.400,-3.600 6.800,0" fill="none" stroke="#4a4a4a" stroke-width=".8"/>
<path d="M20.8,316.0l3.400,2.600l-1.300,3.800h-4.200l-1.300,-3.800z" fill="none" stroke="#4a4a4a" stroke-width=".7"/>
<circle cx="7.8" cy="333" r="3.400" fill="none" stroke="#4a4a4a" stroke-width=".7"/>
<rect x="18.2" y="329.4" width="5.200" height="7.200" fill="#fafafa" stroke="#4a4a4a" stroke-width=".7"/>
<path d="M2,339.9H26" stroke="#cfcfcf" stroke-width=".7"/>
<path d="M5.199999999999999,343.8v6.400M4.199999999999999,348.6h6.400" stroke="#666" stroke-width=".55"/><circle cx="8.2" cy="346.6" r=".8" fill="#4a4a4a"/>
<path d="M17.400000000000002,343.8v6.400M24.2,343.8v6.400M17.400000000000002,347h6.800" stroke="#4a4a4a" stroke-width=".6"/>
<text x="4.4" y="359.5" font-size="3.400" fill="#555">ERC</text><path d="M5.8,361.90000000000003l1.600,1.600l3,-3.200" fill="none" stroke="#2aa85c" stroke-width="1.300"/>
<path d="M20.8,356.90000000000003l3.600,6.600h-7.200z" fill="#f4b219"/><path d="M20.8,359.3v2.200" stroke="#222" stroke-width=".9"/><circle cx="20.8" cy="362.5" r=".5" fill="#222"/>
</svg>
<div id="dm" class="a"></div>
<div class="a" style="left:728.3px;top:49px;width:174.7px;height:15.3px;background:#d9d9d9;"></div>
<span class="t" style="left:757.5px;top:53.8px;color:#333;transform:scaleX(0.775);">Design Manager</span>
<div class="a" style="left:728.3px;top:64.3px;width:174.7px;height:15.5px;background:#f0f0f0;"></div>
<div class="a" style="left:730.5px;top:65px;width:33.4px;height:14.3px;background:#f6f6f6;"></div>
<span class="t" style="left:736.6px;top:68.5px;color:#1c86cf;transform:scaleX(0.826);">Browser</span>
<div class="a" style="left:730.5px;top:78px;width:33.4px;height:1.4px;background:#1287d3;"></div>
<div class="a" style="left:766px;top:65.4px;width:24.7px;height:14.1px;background:#d5d5d5;"></div>
<span class="t" style="left:771.8px;top:68.5px;color:#8c8c8c;transform:scaleX(0.804);">Filter</span>
<div class="a" style="left:871.4px;top:66px;width:12.5px;height:12.7px;background:#d0d0d0;"></div>
<div class="a" style="left:886.7px;top:66px;width:12.7px;height:12.7px;background:#d0d0d0;"></div>
<div class="a" style="left:730.7px;top:83.3px;width:169.6px;height:282px;background:#f0f0f0;border:0.7px solid #dcdcdc"></div>
<span class="t" style="left:737.9px;top:91.8px;color:#222;transform:scaleX(0.843);font-weight:bold;">View:</span>
<div class="a" style="left:758.3px;top:88.9px;width:126.3px;height:11.7px;background:#fff;border:0.6px solid #ababab"></div>
<span class="t" style="left:763.9px;top:91.8px;color:#333;transform:scaleX(0.753);">Parts</span>
<span class="t" style="left:736.8px;top:107.1px;color:#333;transform:scaleX(0.839);">Project Documents</span>
<span class="t" style="left:827.2px;top:107.1px;color:#333;transform:scaleX(0.864);">1 of 1 shown (1 selected)</span>
<div class="a" style="left:789px;top:109.4px;width:35px;height:0.7px;background:#bdbdbd;"></div>
<span class="t" style="left:736.8px;top:193.0px;color:#333;transform:scaleX(0.771);">Parts</span>
<span class="t" style="left:827.2px;top:193.0px;color:#333;transform:scaleX(0.864);">9 of 9 shown (0 selected)</span>
<div class="a" style="left:751.9px;top:195.8px;width:72.2px;height:0.7px;background:#bdbdbd;"></div>
<span class="t" style="left:736.8px;top:278.8px;color:#333;transform:scaleX(0.836);">Items</span>
<span class="t" style="left:827.2px;top:278.8px;color:#333;transform:scaleX(0.864);">0 of 0 shown (0 selected)</span>
<div class="a" style="left:754.5px;top:281.6px;width:69.6px;height:0.7px;background:#bdbdbd;"></div>
<div class="a" style="left:749.9px;top:117.2px;width:102.8px;height:11.2px;background:#fff;border:0.6px solid #b8b8b8"></div>
<span class="t" style="left:752.2px;top:119.1px;color:#a0a0a0;transform:scaleX(0.735);">Search</span>
<div class="a" style="left:749.9px;top:202.9px;width:102.8px;height:11.2px;background:#fff;border:0.6px solid #b8b8b8"></div>
<span class="t" style="left:752.2px;top:204.8px;color:#a0a0a0;transform:scaleX(0.735);">Search</span>
<div class="a" style="left:749.9px;top:288.6px;width:102.8px;height:11.2px;background:#fff;border:0.6px solid #b8b8b8"></div>
<span class="t" style="left:752.2px;top:290.5px;color:#a0a0a0;transform:scaleX(0.735);">Search</span>
<div class="a" style="left:736.6px;top:131.8px;width:158.2px;height:55px;background:#fff;border:0.7px solid #a8a8a8"></div>
<div class="a" style="left:736.6px;top:218.2px;width:158.2px;height:54.2px;background:#fff;border:0.7px solid #a8a8a8"></div>
<div class="a" style="left:736.6px;top:303.2px;width:158.2px;height:56.2px;background:#fff;border:0.7px solid #a8a8a8"></div>
<span class="t" style="left:754px;top:134.1px;color:#333;transform:scaleX(0.777);">Name</span>
<span class="t" style="left:834px;top:134.1px;color:#333;transform:scaleX(0.778);">Type</span>
<div class="a" style="left:784.6px;top:132.6px;width:0.6px;height:9px;background:#dddddd;"></div>
<span class="t" style="left:748px;top:142.8px;color:#333;transform:scaleX(0.812);">All Sheets</span>
<div class="a" style="left:737.2px;top:150.2px;width:157px;height:7.2px;background:#1287d3;"></div>
<span class="t" style="left:757.8px;top:150.3px;color:#fff;transform:scaleX(0.868);">Sheet 1/1</span>
<span class="t" style="left:786.9px;top:150.3px;color:#fff;transform:scaleX(0.809);">Sheet</span>
<div class="a" style="left:767.7px;top:219px;width:0.6px;height:8.6px;background:#dddddd;"></div>
<div class="a" style="left:787.1px;top:219px;width:0.6px;height:8.6px;background:#dddddd;"></div>
<div class="a" style="left:826.4px;top:219px;width:0.6px;height:8.6px;background:#dddddd;"></div>
<div class="a" style="left:863.7px;top:219px;width:0.6px;height:8.6px;background:#dddddd;"></div>
<span class="t" style="left:746.9px;top:220.1px;color:#333;transform:scaleX(0.784);">Type</span>
<span class="t" style="left:770.6px;top:220.1px;color:#333;transform:scaleX(0.755);">Name</span>
<span class="t" style="left:799.9px;top:220.1px;color:#333;transform:scaleX(0.811);">Value</span>
<span class="t" style="left:836.8px;top:220.1px;color:#333;transform:scaleX(0.753);">Library</span>
<span class="t" style="left:866.6px;top:220.1px;color:#333;transform:scaleX(0.752);">Device</span>
<span class="t" style="left:756.6px;top:229.4px;color:#333;transform:scaleX(0.763);">Part</span>
<span class="t" style="left:769.7px;top:229.4px;color:#333;transform:scaleX(0.787);">U$3</span>
<span class="t" style="left:788.9px;top:229.4px;color:#333;transform:scaleX(0.824);">UC_ATTINY...</span>
<span class="t" style="left:828.2px;top:229.4px;color:#333;transform:scaleX(0.831);">fab_new</span>
<span class="t" style="left:865.7px;top:229.4px;color:#333;transform:scaleX(0.741);">SI</span>
<div class="a" style="left:737.2px;top:237.1px;width:149.6px;height:8.5px;background:#ebebeb;"></div>
<span class="t" style="left:756.6px;top:237.9px;color:#333;transform:scaleX(0.763);">Part</span>
<span class="t" style="left:769.7px;top:237.9px;color:#333;transform:scaleX(0.744);">J3</span>
<span class="t" style="left:788.9px;top:237.9px;color:#333;transform:scaleX(0.854);">61300411121</span>
<span class="t" style="left:828.2px;top:237.9px;color:#333;transform:scaleX(0.76);">Headers</span>
<span class="t" style="left:865.7px;top:237.9px;color:#333;transform:scaleX(0.901);">--</span>
<span class="t" style="left:756.6px;top:246.4px;color:#333;transform:scaleX(0.763);">Part</span>
<span class="t" style="left:769.7px;top:246.4px;color:#333;transform:scaleX(0.659);">R1</span>
<span class="t" style="left:788.9px;top:246.4px;color:#333;transform:scaleX(0.811);">10K</span>
<span class="t" style="left:828.2px;top:246.4px;color:#333;transform:scaleX(0.787);">eagle_fab</span>
<span class="t" style="left:865.7px;top:246.4px;color:#333;transform:scaleX(0.822);">1206</span>
<div class="a" style="left:737.2px;top:254.09999999999997px;width:149.6px;height:8.5px;background:#ebebeb;"></div>
<span class="t" style="left:756.6px;top:254.9px;color:#333;transform:scaleX(0.763);">Part</span>
<span class="t" style="left:769.7px;top:254.9px;color:#333;transform:scaleX(0.744);">J1</span>
<span class="t" style="left:788.9px;top:254.9px;color:#333;transform:scaleX(0.854);">61300411121</span>
<span class="t" style="left:828.2px;top:254.9px;color:#333;transform:scaleX(0.76);">Headers</span>
<span class="t" style="left:865.7px;top:254.9px;color:#333;transform:scaleX(0.901);">--</span>
<div class="a" style="left:737px;top:262.6px;width:150px;height:4.4px;overflow:hidden">
<span class="t" style="left:19.600000000000023px;top:0.8px;color:#333;transform:scaleX(0.763);">Part</span>
<span class="t" style="left:32.700000000000045px;top:0.8px;color:#333;transform:scaleX(0.787);">U$4</span>
<span class="t" style="left:51.89999999999998px;top:0.8px;color:#333;transform:scaleX(0.784);">CONN_06_F...</span>
<span class="t" style="left:91.20000000000005px;top:0.8px;color:#333;transform:scaleX(0.831);">fab_new</span>
</div>
<div class="a" style="left:737.2px;top:267.4px;width:156.8px;height:4.4px;background:#f4f4f4;"></div>
<div class="a" style="left:737.2px;top:268.5px;width:88.2px;height:2.5px;background:#777;"></div>
<div class="a" style="left:887px;top:219px;width:7.2px;height:48.4px;background:#fafafa;"></div>
<div class="a" style="left:889.2px;top:219.2px;width:3.1px;height:18.6px;background:#666;"></div>
<div class="a" style="left:783.8px;top:304px;width:0.6px;height:8.6px;background:#dddddd;"></div>
<div class="a" style="left:830.5px;top:304px;width:0.6px;height:8.6px;background:#dddddd;"></div>
<div class="a" style="left:877.5px;top:304px;width:0.6px;height:8.6px;background:#dddddd;"></div>
<span class="t" style="left:755px;top:306.1px;color:#333;transform:scaleX(0.804);">Type</span>
<span class="t" style="left:799.9px;top:306.1px;color:#333;transform:scaleX(0.777);">Name</span>
<span class="t" style="left:845.8px;top:306.1px;color:#333;transform:scaleX(0.829);">Parent</span>
<div class="a" style="left:737.2px;top:352.6px;width:156.8px;height:6.2px;background:#f4f4f4;"></div>
<div class="a" style="left:737.2px;top:353.7px;width:104.5px;height:3px;background:#777;"></div>
<div class="a" style="left:730.7px;top:368.7px;width:25px;height:14px;background:#d5d5d5;"></div>
<span class="t" style="left:734.7px;top:371.9px;color:#8c8c8c;transform:scaleX(0.794);">Sheets</span>
<div class="a" style="left:755.7px;top:368.7px;width:47.4px;height:14px;background:#f6f6f6;"></div>
<span class="t" style="left:761.7px;top:371.9px;color:#1c86cf;transform:scaleX(0.819);">Selection Filter</span>
<div class="a" style="left:758px;top:381.5px;width:45.1px;height:1.5px;background:#1287d3;"></div>
<div class="a" style="left:803.5px;top:368.7px;width:33.1px;height:14px;background:#d5d5d5;"></div>
<span class="t" style="left:808.5px;top:371.9px;color:#8c8c8c;transform:scaleX(0.851);">Inspector</span>
<div class="a" style="left:730px;top:383.4px;width:165px;height:77.4px;background:#f0f0f0;border:0.6px solid #c8c8c8"></div>
<div class="a" style="left:730.4px;top:383.8px;width:164.2px;height:9.8px;background:#fcfcfc;"></div>
<div class="a" style="left:895px;top:383.4px;width:6px;height:77.4px;background:#f8f8f8;"></div>
<span class="t" style="left:731.4px;top:383.9px;color:#222;transform:scaleX(0.766);">Types</span>
<div class="a" style="left:731px;top:393.9px;width:147.2px;height:66.8px;background:#0e8fd8;"></div>
<span class="t" style="left:742.9px;top:395.1px;color:#fff;transform:scaleX(0.89);">Attribute</span>
<span class="t" style="left:742.9px;top:404.48px;color:#fff;transform:scaleX(0.785);">Bus Wire</span>
<span class="t" style="left:742.9px;top:413.86px;color:#fff;transform:scaleX(0.721);">Circle</span>
<span class="t" style="left:742.9px;top:423.24px;color:#fff;transform:scaleX(0.78);">Dimension</span>
<span class="t" style="left:742.9px;top:432.62px;color:#fff;transform:scaleX(0.742);">Frame</span>
<span class="t" style="left:742.9px;top:442.0px;color:#fff;transform:scaleX(0.771);">Group</span>
<span class="t" style="left:742.9px;top:451.38px;color:#fff;transform:scaleX(0.809);">Junction</span>
<div class="a" style="left:878.4px;top:393.9px;width:6.8px;height:66.8px;background:#fafafa;"></div>
<div class="a" style="left:880.3px;top:394.6px;width:2.4px;height:28.2px;background:#666;"></div>
<div class="a" style="left:885.4px;top:393.6px;width:0.7px;height:67px;background:#777;"></div>
<div class="a" style="left:896.7px;top:383.4px;width:2.4px;height:62px;background:#555;"></div>
<svg class="a" style="left:728px;top:49px" width="175" height="421" viewBox="728 49 175 421" font-family="Liberation Sans, sans-serif">
<path d="M734,55.2l4.2,4.2M738.2,55.2l-4.2,4.2" stroke="#777" stroke-width=".8"/>
<path d="M743.2,59.4l4,-4M744.6,55.2h2.8v2.800" stroke="#777" stroke-width=".8" fill="none"/>
<rect x="874" y="69.400" width="3.600" height="2.400" fill="none" stroke="#555" stroke-width=".6"/><path d="M877.400,71.400l3.200,1.800l-1.300,.3l.8,1.600l-.7,.3l-.8,-1.600l-1,.9z" fill="#222"/>
<circle cx="892.400" cy="71.600" r="2.500" fill="none" stroke="#555" stroke-width=".7"/><path d="M894.200,73.400l2.400,2.400" stroke="#555" stroke-width=".9"/><path d="M891.200,71.600h2.400M892.400,70.400v2.400" stroke="#555" stroke-width=".5"/>
<path d="M879,94.200h2.800l-1.400,1.800z" fill="#333"/>
<circle cx="893.600" cy="94.400" r="3.500" fill="#fafafa" stroke="#8a8a8a" stroke-width=".6"/><text x="893.600" y="96.200" font-size="5" text-anchor="middle" fill="#444">?</text>
<circle cx="742.800" cy="121.60000000000001" r="1.900" fill="none" stroke="#8a8a8a" stroke-width=".7"/><path d="M744.200,123.0l1.800,1.800" stroke="#8a8a8a" stroke-width=".8"/><path d="M745.600,125.0h1.800l-.9,1.100z" fill="#555"/>
<path d="M848.200,122.0h2.600l-1.300,1.700z" fill="#333"/>
<path d="M868.800,119.80000000000001h7.400M868.800,121.80000000000001h7.400M868.800,123.80000000000001h7.400" stroke="#444" stroke-width=".8"/><path d="M876.400,126.2h2.200l-1.100,1.400z" fill="#333"/>
<circle cx="886.400" cy="121.80000000000001" r=".7" fill="#555"/><circle cx="889.200" cy="121.80000000000001" r=".7" fill="#555"/><circle cx="892" cy="121.80000000000001" r=".7" fill="#555"/>
<path d="M890,126.2h2.200l-1.100,1.400z" fill="#333"/>
<circle cx="742.800" cy="207.39999999999998" r="1.900" fill="none" stroke="#8a8a8a" stroke-width=".7"/><path d="M744.200,208.79999999999998l1.800,1.800" stroke="#8a8a8a" stroke-width=".8"/><path d="M745.600,210.79999999999998h1.800l-.9,1.100z" fill="#555"/>
<path d="M848.200,207.79999999999998h2.600l-1.300,1.700z" fill="#333"/>
<path d="M868.800,205.6h7.400M868.800,207.6h7.400M868.800,209.6h7.400" stroke="#444" stroke-width=".8"/><path d="M876.400,212.0h2.200l-1.100,1.400z" fill="#333"/>
<circle cx="886.400" cy="207.6" r=".7" fill="#bdbdbd"/><circle cx="889.200" cy="207.6" r=".7" fill="#bdbdbd"/><circle cx="892" cy="207.6" r=".7" fill="#bdbdbd"/>
<circle cx="742.800" cy="293.2" r="1.900" fill="none" stroke="#8a8a8a" stroke-width=".7"/><path d="M744.200,294.6l1.800,1.800" stroke="#8a8a8a" stroke-width=".8"/><path d="M745.600,296.6h1.800l-.9,1.100z" fill="#555"/>
<path d="M848.200,293.6h2.600l-1.300,1.700z" fill="#333"/>
<path d="M868.800,291.4h7.400M868.800,293.4h7.400M868.800,295.4h7.400" stroke="#444" stroke-width=".8"/><path d="M876.400,297.8h2.200l-1.100,1.400z" fill="#333"/>
<circle cx="886.400" cy="293.4" r=".7" fill="#bdbdbd"/><circle cx="889.200" cy="293.4" r=".7" fill="#bdbdbd"/><circle cx="892" cy="293.4" r=".7" fill="#bdbdbd"/>
<path d="M759.4,134.0l1.400,-1.400l1.400,1.400" fill="none" stroke="#666" stroke-width=".5"/>
<path d="M751.3000000000001,220.4l1.400,-1.400l1.400,1.400" fill="none" stroke="#666" stroke-width=".5"/>
<path d="M759.4,305.40000000000003l1.400,-1.400l1.400,1.400" fill="none" stroke="#666" stroke-width=".5"/>
<path d="M741,145.200h2.600l-1.300,1.900z" fill="#444"/>
<path d="M748.600,232.1h1.400M748.600,233.7h1.400" stroke="#999" stroke-width=".5"/><path d="M750,230.89999999999998l2.600,1.800l-2.600,1.800z" fill="#777"/><path d="M752.600,232.7h1.200" stroke="#777" stroke-width=".5"/>
<path d="M748.600,240.6h1.400M748.600,242.2h1.400" stroke="#999" stroke-width=".5"/><path d="M750,239.39999999999998l2.600,1.800l-2.600,1.800z" fill="#777"/><path d="M752.600,241.2h1.200" stroke="#777" stroke-width=".5"/>
<path d="M748.600,249.1h1.400M748.600,250.7h1.400" stroke="#999" stroke-width=".5"/><path d="M750,247.89999999999998l2.600,1.800l-2.600,1.800z" fill="#777"/><path d="M752.600,249.7h1.200" stroke="#777" stroke-width=".5"/>
<path d="M748.600,257.59999999999997h1.400M748.600,259.2h1.400" stroke="#999" stroke-width=".5"/><path d="M750,256.4l2.600,1.800l-2.600,1.800z" fill="#777"/><path d="M752.600,258.2h1.200" stroke="#777" stroke-width=".5"/>
<path d="M733.4,395.8h3l3.400,3.400l-2.600,2.600l-3.800,-3.600z" fill="#4aa9e2" stroke="#d6eaf8" stroke-width=".8"/><circle cx="734.9" cy="397.3" r=".6" fill="#e8f3fb"/>
<path d="M733.1999999999999,409.78000000000003h6.400v-2.400" fill="none" stroke="#2f8fe6" stroke-width="1"/>
<circle cx="736.4" cy="417.36" r="3.300" fill="#b9d9f3"/>
<path d="M733.1999999999999,424.14v5.200M739.6,424.14v5.200M733.1999999999999,426.14h6.400" stroke="#34607f" stroke-width=".8"/>
<rect x="733.1999999999999" y="432.92" width="6.400" height="6.400" fill="#2a8ed6" stroke="#7c8c9a" stroke-width="1.100"/>
<rect x="733.4" y="442.3" width="6" height="6.400" fill="#b9d9f3"/><path d="M735.4,442.3v6.400M737.4,442.3v6.400" stroke="#7fb5e0" stroke-width=".5"/>
<path d="M733.1999999999999,454.88h6.400M736.4,451.68v6.400" stroke="#2aa85c" stroke-width=".8"/>
</svg>
<div class="a" style="left:28px;top:453.3px;width:700px;height:7.7px;background:#f8f8f8"></div>
<div class="a" style="left:720px;top:65px;width:8.3px;height:396px;background:#f8f8f8"></div>
<div class="a" style="left:28.6px;top:456px;width:691.4px;height:2.8px;background:#858585"></div>
<div class="a" style="left:722.8px;top:65px;width:2.6px;height:213px;background:#858585"></div>
<div id="status" class="a"><span class="t" style="left:2.8px;top:1.0px;color:#2e2e2e;transform:scaleX(0.849);">Left-click &amp; drag to define group (or left-click to start defining a group polygon)</span></div>
<svg class="a" style="left:880px;top:461px" width="20" height="9" viewBox="880 461 20 9"><!--lightning--><path d="M889,462.6l-3.800,3.400h2.300l-1.700,3.200l4.800,-4h-2.500l2.100,-2.600z" fill="#2bb25f"/></svg>
<div class="a" style="left:901.3px;top:0;width:1.7px;height:66px;background:#000"></div>
<div class="a" style="left:901.3px;top:66px;width:1.7px;height:395px;background:#26282c"></div>
</body></html>
